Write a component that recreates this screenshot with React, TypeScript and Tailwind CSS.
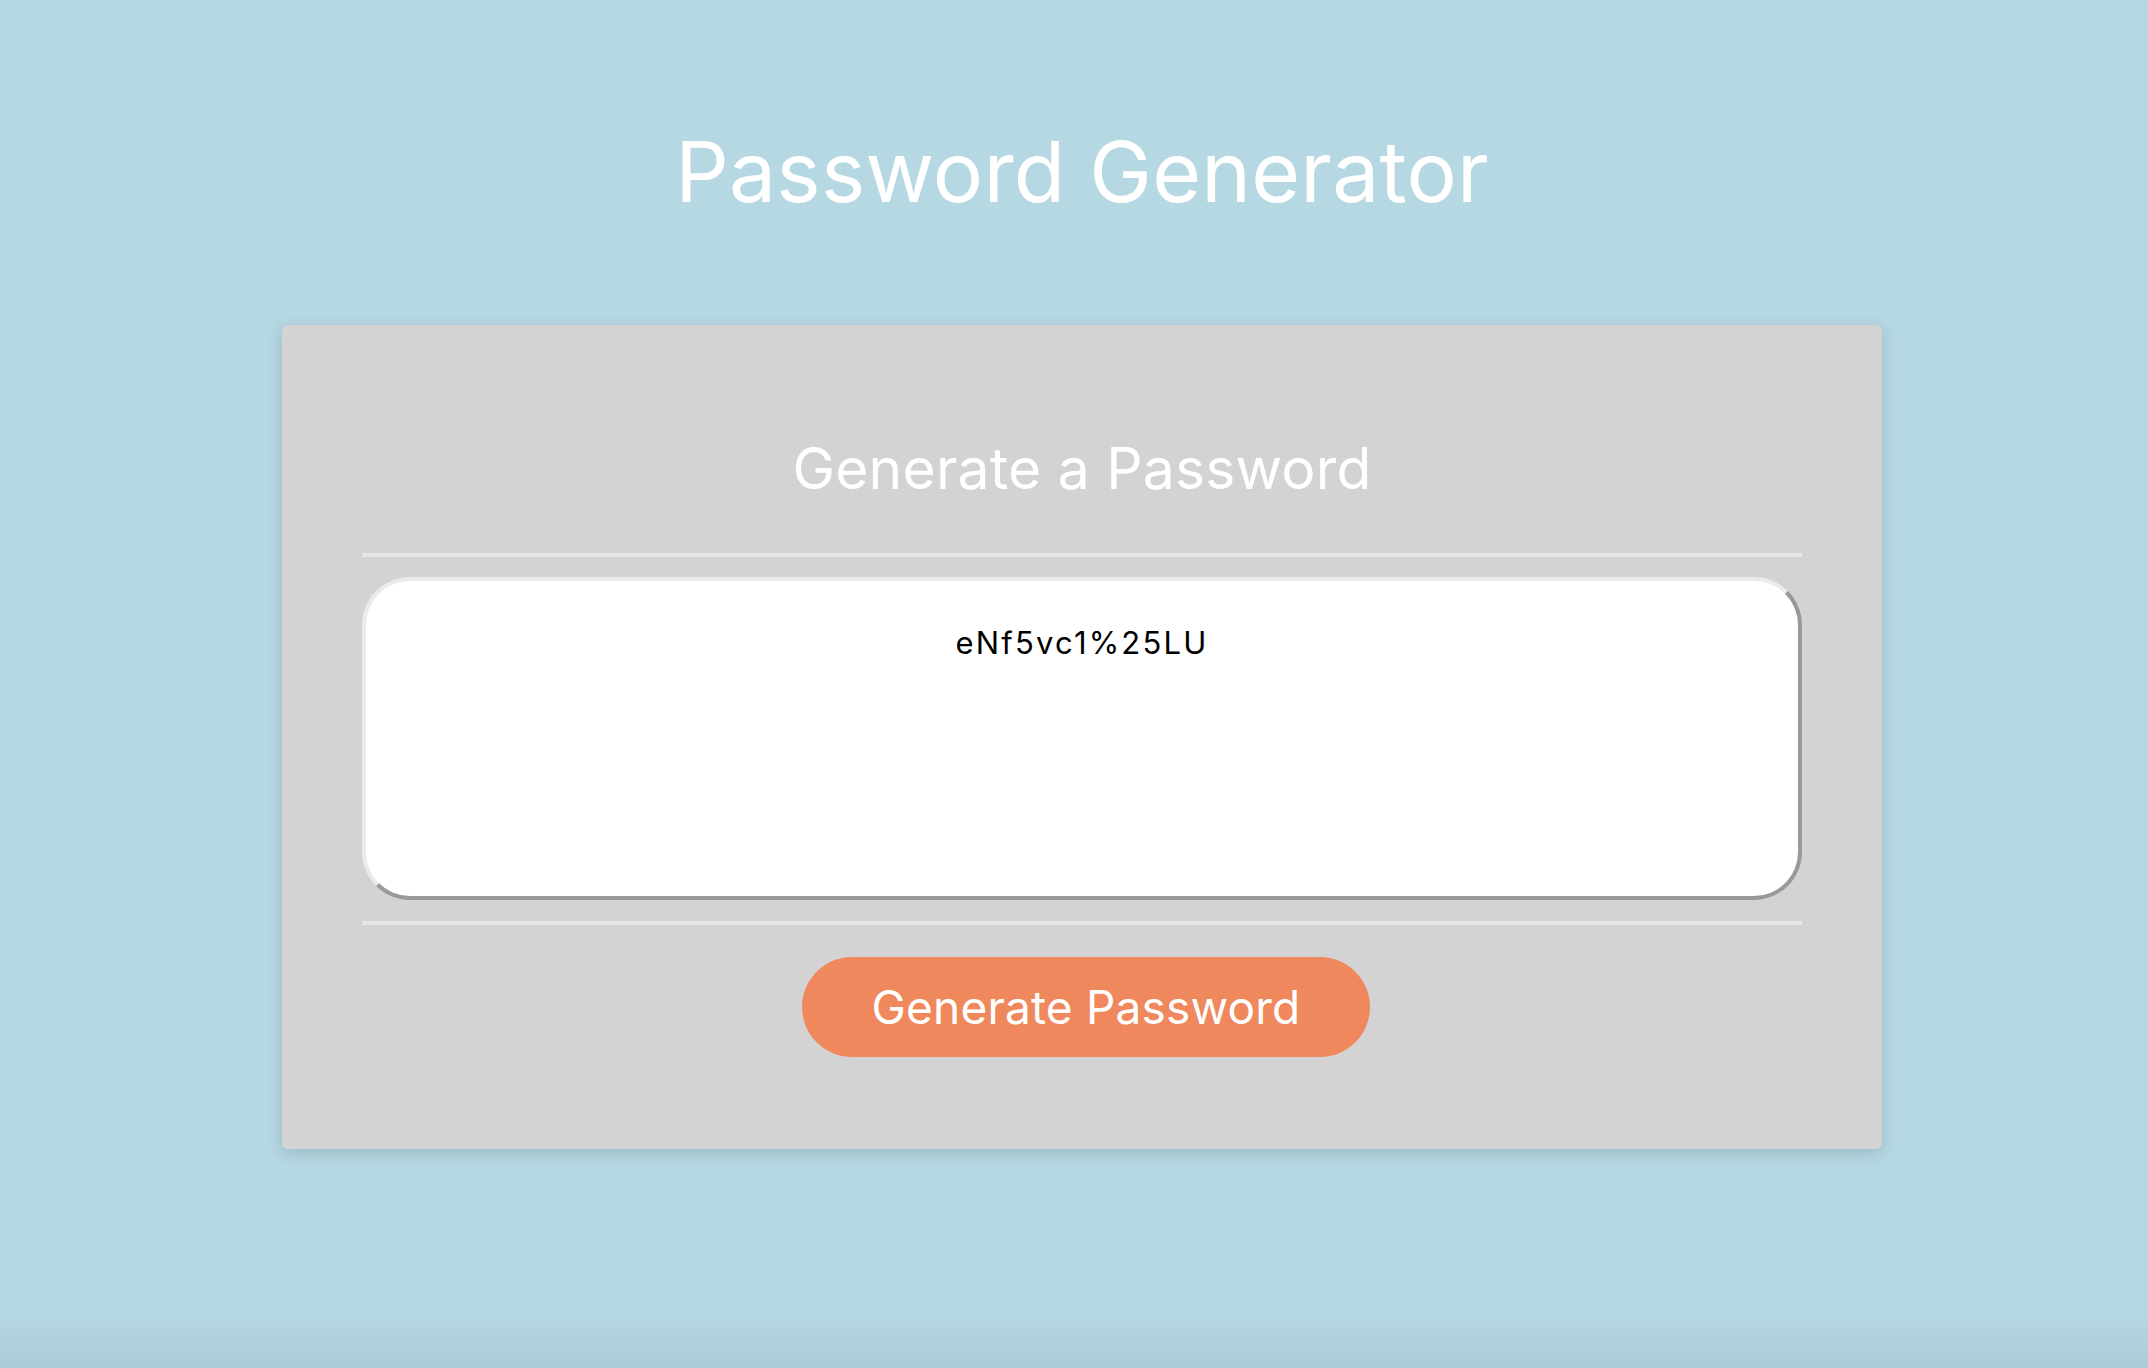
/**
 * Password generator page: title, card with output box and generate button.
 */

import { useState, useCallback } from 'react';

const CHARS = 'abcdefghijklmnopqrstuvwxyzABCDEFGHIJKLMNOPQRSTUVWXYZ0123456789%!#$&*';

function makePassword(length: number) {
  let out = '';
  for (let i = 0; i < length; i++) {
    out += CHARS[Math.floor(Math.random() * CHARS.length)];
  }
  return out;
}

export default function App() {
  const [password, setPassword] = useState('eNf5vc1%25LU');

  const handleGenerate = useCallback(() => {
    setPassword(makePassword(12));
  }, []);

  return (
    <div
      className="min-h-screen w-full flex flex-col items-center pl-[16px]
                 bg-[linear-gradient(to_bottom,#b6d8e3_0%,#b6d8e3_96%,#abcbd6_100%)]"
      style={{ fontFamily: 'Inter, "Liberation Sans", sans-serif' }}
    >
      <h1 className="mt-[130px] text-[84px] leading-none font-normal text-white tracking-[0.2px]">
        Password Generator
      </h1>

      {/* Card */}
      <div
        className="mt-[111px] w-[1600px] bg-[#d3d3d3] rounded-md
                   shadow-[0_4px_16px_rgba(0,0,0,0.15)] px-[80px] pt-[115px] pb-[92px]
                   flex flex-col items-center"
      >
        <h2 className="text-[57px] leading-none font-normal text-white tracking-[0.2px]">
          Generate a Password
        </h2>

        <div className="mt-[56px] h-[4px] w-full bg-[#e5e5e5]" />

        <textarea
          readOnly
          value={password}
          aria-label="Generated Password"
          className="mt-[20px] w-full h-[323px] resize-none outline-none bg-white text-black
                     text-center text-[31px] leading-none tracking-[2.2px] pt-[46px] px-4
                     rounded-[48px] border-4 border-solid
                     border-t-[#ebebeb] border-l-[#ebebeb] border-r-[#999999] border-b-[#999999]"
          style={{ fontFamily: 'Inter, "Liberation Sans", sans-serif' }}
        />

        <div className="mt-[21px] h-[4px] w-full bg-[#e5e5e5]" />

        <div className="mt-[32px] w-full flex justify-center pl-[8px]">
          <button
            onClick={handleGenerate}
            className="w-[568px] h-[100px] rounded-full bg-[#f0885e] text-white
                       text-[46px] leading-none font-normal tracking-[0.2px]"
          >
            Generate Password
          </button>
        </div>
      </div>
    </div>
  );
}
